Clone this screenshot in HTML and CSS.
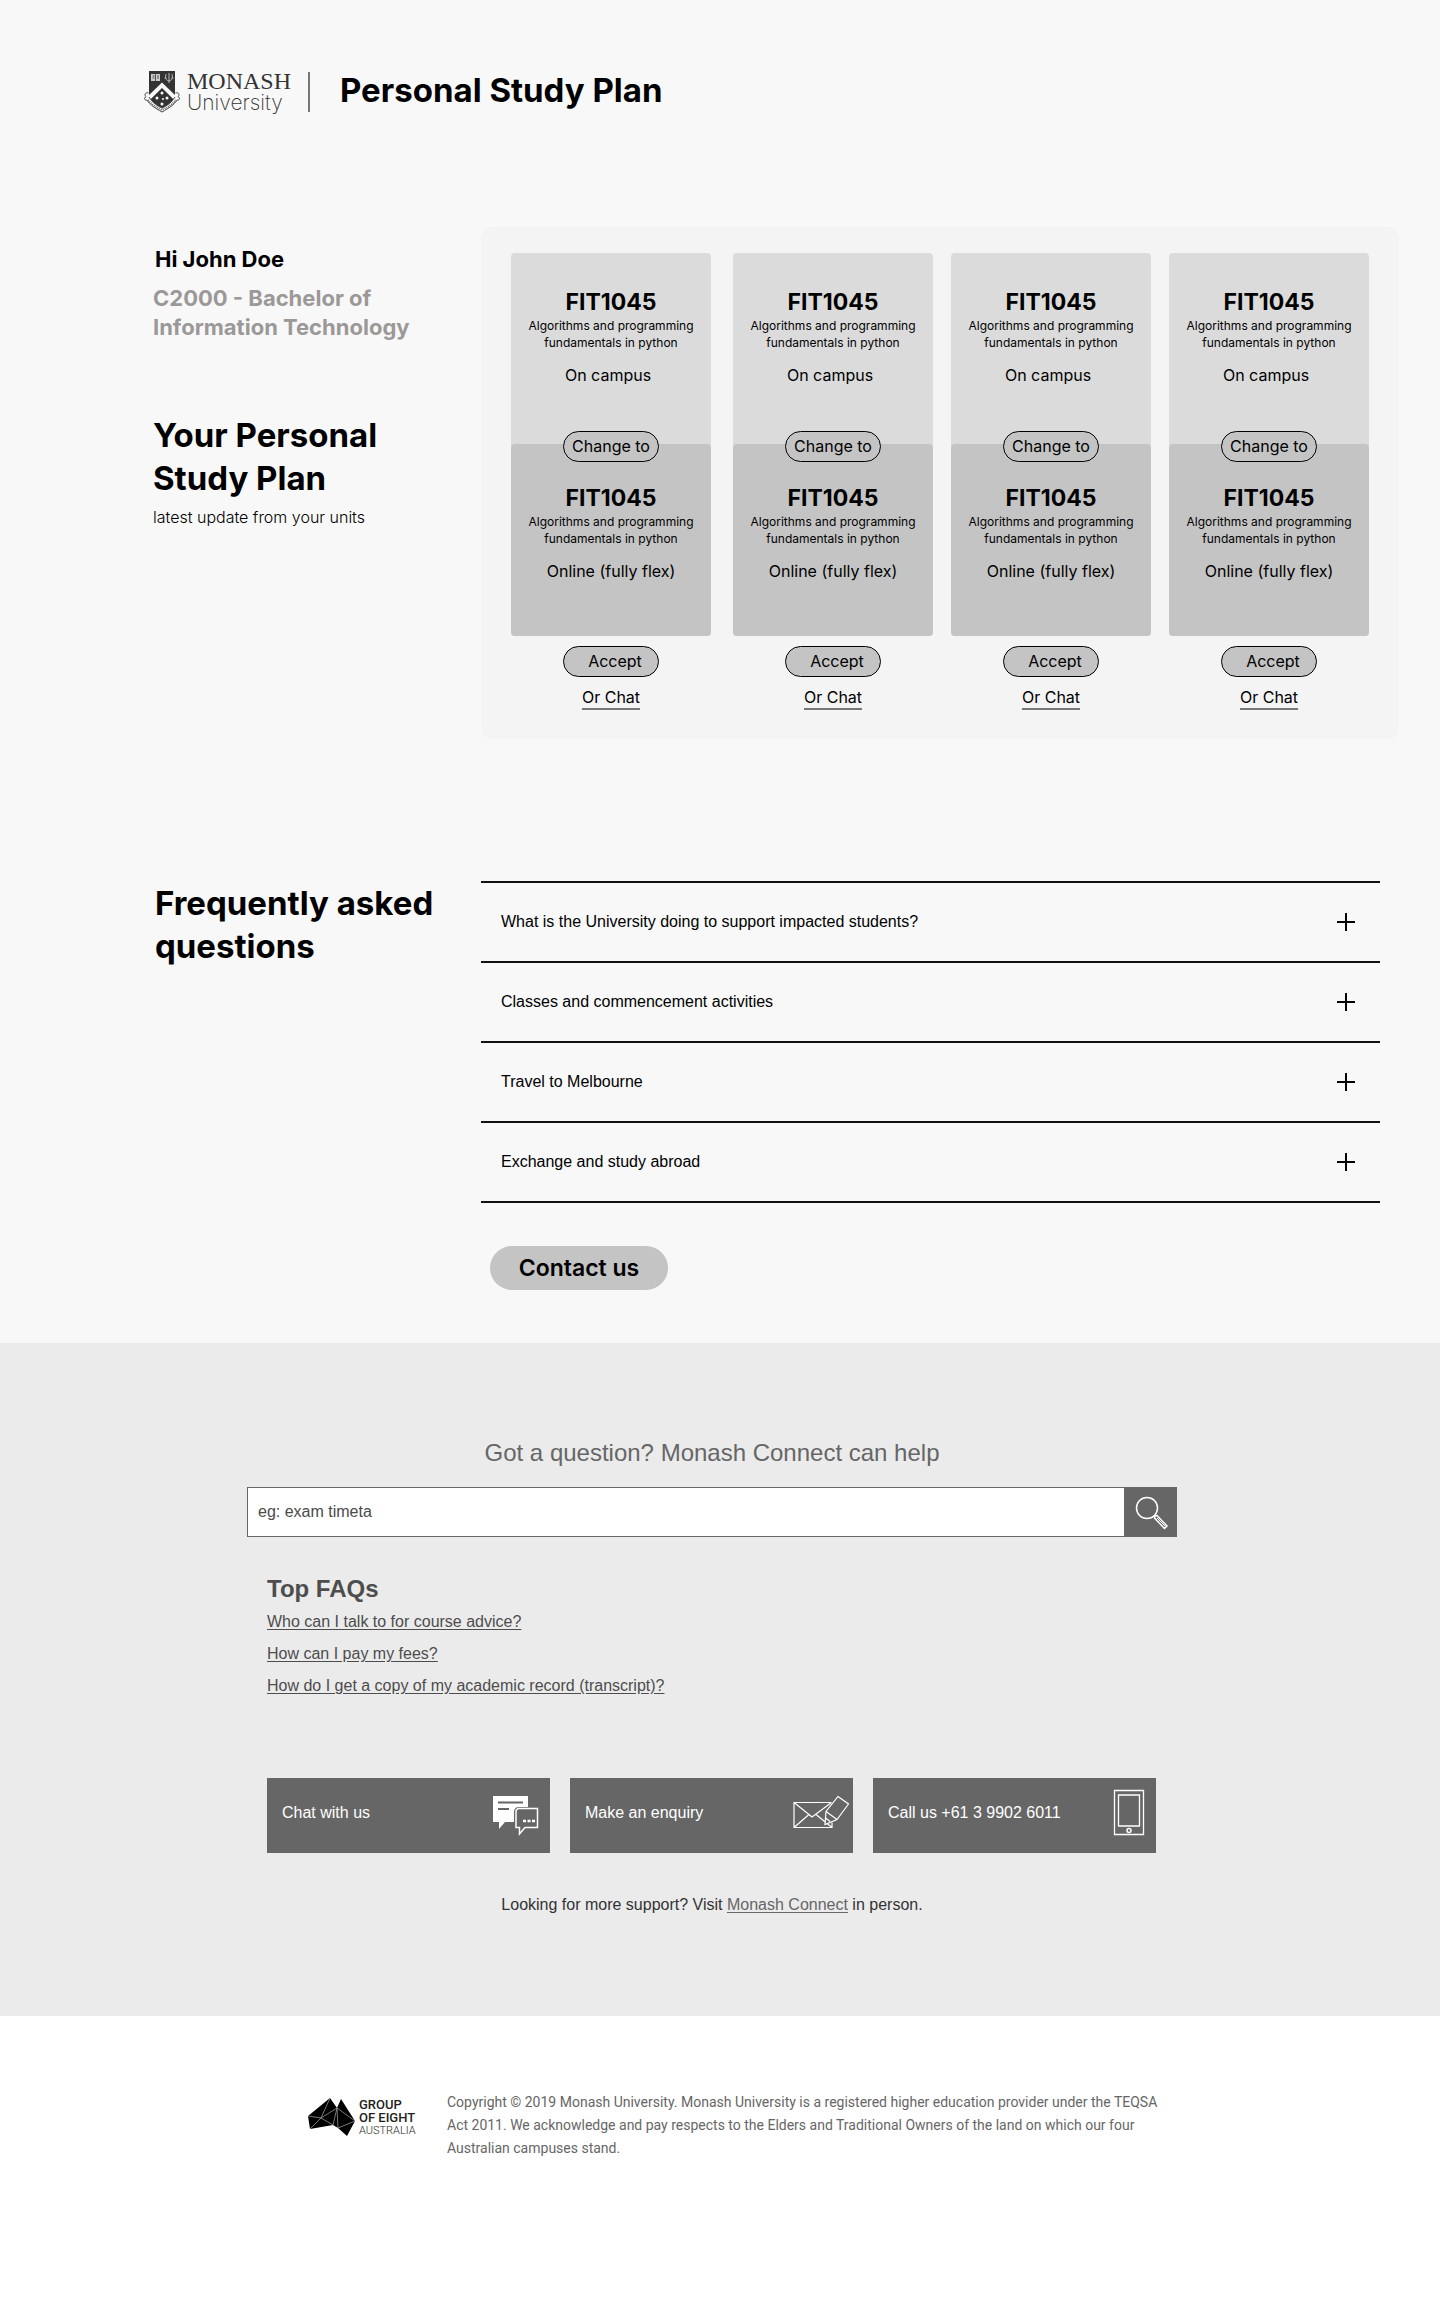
FILE: index.html
```html
<!DOCTYPE html>
<html lang="en">
<head>
<meta charset="utf-8">
<meta name="viewport" content="width=device-width, initial-scale=1">
<title>Personal Study Plan - Monash University</title>
<link rel="stylesheet" href="styles.css">
</head>
<body>
<div class="plan-page">
  <header class="site-header">
    <a class="brand" href="#" aria-label="Monash University">
      <svg class="crest" viewBox="0 0 38 42" aria-hidden="true">
        <path d="M5 0h26v22c0 7-6 12-13 15C11 34 5 29 5 22z" fill="#333"/>
        <path d="M18 11.500 33 26v6L18 17.500 3 32v-6z" fill="#f8f8f8"/>
        <path d="M18 17 7 28c3 4 7 7 11 9 4-2 8-5 11-9z" fill="#333"/>
        <path d="M7 3h9v7h-9z" fill="#ccc"/>
        <path d="M11.500 3v7M8.500 5h2M8.500 7h2M13 5h2M13 7h2" stroke="#333" stroke-width=".8"/>
        <path d="M22 3c-1 5 0 6 3 7 3-1 4-2 3-7M25 2v10M20.500 7h2M27.500 7h2" fill="none" stroke="#bbb"/>
        <g fill="#f8f8f8"><circle cx="18" cy="22" r="1.500"/><circle cx="18" cy="33" r="1.500"/><circle cx="13" cy="27" r="1.500"/><circle cx="23" cy="27" r="1.500"/><circle cx="19" cy="28" r="1"/></g>
        <path d="M4.500 22C1 21 0 24 2 25.500c-3 2-1 4 1 3.500 3 5 8 8 15 12 7-4 12-7 15-12 2 .5 4-1.500 1-3.500 2-1.500 1-4.500-2.500-3.500M5 26c3 5 7 8 13 11 6-3 10-6 13-11" fill="none" stroke="#444"/>
        <path d="M4 29c4 5 8 7 14 10 6-3 10-5 14-10" fill="none" stroke="#666" stroke-width="2" stroke-dasharray="1 1"/>
      </svg>
      <span class="wordmark"><span class="wordmark-top">MONASH</span><span class="wordmark-bottom">University</span></span>
    </a>
    <h1 class="page-title">Personal Study Plan</h1>
  </header>

  <main>
    <section class="split plan">
      <div class="intro">
        <p class="greeting">Hi John Doe</p>
        <p class="course">C2000 - Bachelor of<br>Information Technology</p>
        <h2 class="heading">Your Personal<br>Study Plan</h2>
        <p class="note">latest update from your units</p>
      </div>
      <div class="panel">
        <article class="unit">
          <div class="stack">
            <div class="offer"><h3 class="code">FIT1045</h3><p class="desc">Algorithms and programming fundamentals in python</p><p class="mode mode-campus">On campus</p></div>
            <div class="offer offer-new"><button class="pill pill-change" type="button">Change to</button><h3 class="code">FIT1045</h3><p class="desc">Algorithms and programming fundamentals in python</p><p class="mode">Online (fully flex)</p></div>
          </div>
          <button class="pill pill-accept" type="button">Accept</button>
          <a class="chat-link" href="#">Or Chat</a>
        </article>
        <article class="unit">
          <div class="stack">
            <div class="offer"><h3 class="code">FIT1045</h3><p class="desc">Algorithms and programming fundamentals in python</p><p class="mode mode-campus">On campus</p></div>
            <div class="offer offer-new"><button class="pill pill-change" type="button">Change to</button><h3 class="code">FIT1045</h3><p class="desc">Algorithms and programming fundamentals in python</p><p class="mode">Online (fully flex)</p></div>
          </div>
          <button class="pill pill-accept" type="button">Accept</button>
          <a class="chat-link" href="#">Or Chat</a>
        </article>
        <article class="unit">
          <div class="stack">
            <div class="offer"><h3 class="code">FIT1045</h3><p class="desc">Algorithms and programming fundamentals in python</p><p class="mode mode-campus">On campus</p></div>
            <div class="offer offer-new"><button class="pill pill-change" type="button">Change to</button><h3 class="code">FIT1045</h3><p class="desc">Algorithms and programming fundamentals in python</p><p class="mode">Online (fully flex)</p></div>
          </div>
          <button class="pill pill-accept" type="button">Accept</button>
          <a class="chat-link" href="#">Or Chat</a>
        </article>
        <article class="unit">
          <div class="stack">
            <div class="offer"><h3 class="code">FIT1045</h3><p class="desc">Algorithms and programming fundamentals in python</p><p class="mode mode-campus">On campus</p></div>
            <div class="offer offer-new"><button class="pill pill-change" type="button">Change to</button><h3 class="code">FIT1045</h3><p class="desc">Algorithms and programming fundamentals in python</p><p class="mode">Online (fully flex)</p></div>
          </div>
          <button class="pill pill-accept" type="button">Accept</button>
          <a class="chat-link" href="#">Or Chat</a>
        </article>
      </div>
    </section>

    <section class="split faq">
      <h2 class="heading">Frequently asked<br>questions</h2>
      <div>
        <ul class="faq-list">
          <li><button class="faq-item" type="button" aria-expanded="false">What is the University doing to support impacted students?<svg class="plus" viewBox="0 0 18 18" aria-hidden="true"><path d="M9 0v18M0 9h18"/></svg></button></li>
          <li><button class="faq-item" type="button" aria-expanded="false">Classes and commencement activities<svg class="plus" viewBox="0 0 18 18" aria-hidden="true"><path d="M9 0v18M0 9h18"/></svg></button></li>
          <li><button class="faq-item" type="button" aria-expanded="false">Travel to Melbourne<svg class="plus" viewBox="0 0 18 18" aria-hidden="true"><path d="M9 0v18M0 9h18"/></svg></button></li>
          <li><button class="faq-item" type="button" aria-expanded="false">Exchange and study abroad<svg class="plus" viewBox="0 0 18 18" aria-hidden="true"><path d="M9 0v18M0 9h18"/></svg></button></li>
        </ul>
        <button class="contact" type="button">Contact us</button>
      </div>
    </section>
  </main>
</div>

<section class="connect">
  <div class="connect-inner">
    <h2 class="connect-title"><label for="question">Got a question? Monash Connect can help</label></h2>
    <form class="search">
      <input class="search-input" id="question" type="text" value="eg: exam timeta">
      <button class="search-button" type="submit" aria-label="Search">
        <svg width="36" height="36" viewBox="0 0 36 36" fill="none" stroke="#fff" aria-hidden="true"><circle cx="14" cy="14" r="10.500" stroke-width="1.500"/><path d="m22 22 2-.5 10 10.500-2.500 2.500L21.500 24z" stroke-width="1.500"/><path d="m24 24 8 8"/></svg>
      </button>
    </form>
    <div class="help">
      <h3 class="help-title">Top FAQs</h3>
      <ul class="help-links">
        <li><a href="#">Who can I talk to for course advice?</a></li>
        <li><a href="#">How can I pay my fees?</a></li>
        <li><a href="#">How do I get a copy of my academic record (transcript)?</a></li>
      </ul>
      <div class="actions">
        <a class="action action-chat" href="#">Chat with us
          <svg width="45" height="36" viewBox="0 0 45 36" aria-hidden="true"><path d="M0 1h35v11H26c-3 0-5 2-5 5v10h-9l-6 7v-7H0z" fill="#fff"/><path d="M5 7.500h25M5 14h11" stroke="#666" stroke-width="2"/><path d="M25 14.500h19.500v19H32L26.500 40v-6.500H23v-17z" transform="translate(0 -1)" fill="#666" stroke="#fff" stroke-width="1.500"/><path d="M30 26h3M34.500 26h3M39 26h3" stroke="#fff" stroke-width="2.500"/></svg>
        </a>
        <a class="action action-mail" href="#">Make an enquiry
          <svg width="56" height="36" viewBox="0 0 56 36" fill="none" stroke="#fff" stroke-width="1.200" aria-hidden="true"><path d="M38.500 7.500H1v25h38v-5M1 7.500l15 12 3 2.500 19.500-14.500M1 32.500l15-13M39 32.500 23 19.500"/><path d="M45 1.500 55.500 9 44 24.500 32 29.500l1-13zM33 16.500l11 8M32 22.500l5 4" fill="#666"/></svg>
        </a>
        <a class="action" href="#">Call us +61 3 9902 6011
          <svg width="30" height="46" viewBox="0 0 30 46" fill="none" stroke="#fff" aria-hidden="true"><path d="M.5.5h29v44H.5zM4.500 5h21v31h-21z" stroke-width="1.300"/><circle cx="15" cy="40.500" r="2" stroke-width="1.500"/></svg>
        </a>
      </div>
    </div>
    <p class="support">Looking for more support? Visit <a href="#">Monash Connect</a> in person.</p>
  </div>
</section>

<footer class="site-footer">
  <div class="go8">
    <svg width="49" height="40" viewBox="0 0 49 40" aria-hidden="true"><path d="M1 19 23 1l7 10 4-9 14 22-8 15-9-8-5-3-23 4z" fill="#000"/><path d="M1 19l13 2L23 1M14 21l16-10M14 21l-11 11M14 21l12 7 4-17 1 20M30 11l18 13-17 7" fill="none" stroke="#aaa" stroke-width=".7"/></svg>
    <p class="go8-name"><b>GROUP</b><b>OF EIGHT</b><span>AUSTRALIA</span></p>
  </div>
  <p class="legal">Copyright © 2019 Monash University. Monash University is a registered higher education provider under the TEQSA Act 2011. We acknowledge and pay respects to the Elders and Traditional Owners of the land on which our four Australian campuses stand.</p>
</footer>
</body>
</html>
```
FILE: styles.css
```css
* { box-sizing: border-box; }
body {
  margin: 0;
  background: #fff;
  color: #000;
  font-family: "Liberation Sans", Arial, sans-serif;
  font-size: 16px;
}
h1, h2, h3, p, ul { margin: 0; padding: 0; }
ul { list-style: none; }
button { font: inherit; color: inherit; cursor: pointer; }
a { color: inherit; }

.plan-page {
  padding: 68px 41px 53px 153px;
  background: #f8f8f8;
  font-family: Inter, sans-serif;
}
.site-header {
  display: flex;
  align-items: center;
  height: 48px;
  margin: 0 0 111px -9px;
}
.brand {
  display: flex;
  align-items: center;
  gap: 5px;
  width: 166px;
  height: 40px;
  border-right: 2px solid #777;
  color: #333;
  text-decoration: none;
}
.crest { flex: none; width: 38px; height: 42px; }
.wordmark { display: flex; flex-direction: column; }
.wordmark-top { font: 24px/22px "Liberation Serif", serif; }
.wordmark-bottom { font-size: 21px; line-height: 22px; font-weight: 200; }
.page-title {
  margin-left: 30px;
  padding-bottom: 4px;
  font-size: 33px;
  line-height: 44px;
  font-weight: 700;
}

.split {
  display: grid;
  grid-template-columns: 328px minmax(0, 1fr);
}
.intro { padding-top: 18px; }
.greeting, .course, .code {
  font-size: 22px;
  line-height: 29px;
  font-weight: 700;
}
.greeting { margin: 0 0 10px 2px; }
.course { color: #9c9898; }
.code { font-size: 23px; }
.heading {
  font-size: 33px;
  line-height: 43px;
  font-weight: 700;
}
.intro .heading { margin: 72px 0 7px; }
.note { font-size: 16px; line-height: 20px; font-weight: 300; }

.panel {
  display: grid;
  grid-template-columns: 204fr 200fr 200fr 200fr;
  column-gap: 18px;
  padding: 26px 30px 29px;
  border-radius: 10px;
  background: #f4f4f4;
}
.unit {
  display: flex;
  flex-direction: column;
  align-items: center;
  max-width: 200px;
  font-size: 16px;
}
.stack {
  width: 100%;
  margin-bottom: 10px;
  border-radius: 4px;
  background: #dbdbdb;
  text-align: center;
}
.offer { min-height: 191px; padding: 35px 10px 0; }
.offer-new {
  position: relative;
  min-height: 192px;
  padding-top: 40px;
  border-radius: 4px;
  background: #c4c4c4;
}
.desc { font-size: 12px; line-height: 17px; }
.mode { margin-top: 13px; line-height: 22px; }
.mode-campus { padding-right: 6px; }
.pill {
  width: 96px;
  height: 31px;
  padding: 0;
  border: 1px solid #000;
  border-radius: 16px;
  background: #c4c4c4;
  line-height: 29px;
}
.pill-change {
  position: absolute;
  top: -13px;
  left: calc(50% - 48px);
}
.pill-accept { padding-left: 8px; }
.chat-link {
  margin-top: 10px;
  border-bottom: 2px solid #777;
  line-height: 21px;
  text-decoration: none;
}

.faq { margin-top: 142px; padding-right: 19px; }
.faq .heading { padding: 1px 0 0 2px; }
.faq-list { border-bottom: 2px solid #111; }
.faq-item {
  display: flex;
  align-items: center;
  justify-content: space-between;
  width: 100%;
  height: 80px;
  padding: 0 25px 0 20px;
  border: 0;
  border-top: 2px solid #111;
  background: none;
  font: 16px/20px "Liberation Sans", Arial, sans-serif;
  text-align: left;
}
.plus { width: 18px; height: 18px; stroke: #000; stroke-width: 2; }
.contact {
  width: 178px;
  height: 44px;
  margin: 43px 0 0 9px;
  padding: 0;
  border: 0;
  border-radius: 22px;
  background: #c4c4c4;
  font-size: 23px;
  font-weight: 600;
}

.connect {
  padding: 96px 16px 102px 0;
  background: #ebebeb;
}
.connect-inner { max-width: 930px; margin: 0 auto; }
.connect-title {
  color: #666;
  font-size: 24px;
  line-height: 28px;
  font-weight: 400;
  text-align: center;
}
.search { display: flex; height: 50px; margin-top: 20px; }
.search-input {
  flex: 1;
  min-width: 0;
  padding: 0 10px;
  border: 1px solid #666;
  border-right: 0;
  border-radius: 0;
  background: #fff;
  color: #4a4a4a;
  font: inherit;
}
.search-button {
  display: grid;
  place-items: center;
  width: 53px;
  padding: 0;
  border: 0;
  background: #666;
}
.help { padding: 38px 21px 0 20px; color: #4d4d4d; }
.help-title { margin-bottom: 3px; font-size: 24px; line-height: 28px; }
.help-links { line-height: 32px; }
.help-links a, .support a { text-underline-offset: 2px; }
.actions {
  display: grid;
  grid-template-columns: repeat(3, 1fr);
  gap: 20px;
  margin-top: 76px;
}
.action {
  display: flex;
  align-items: center;
  justify-content: space-between;
  height: 75px;
  padding: 0 12px 6px 15px;
  background: #666;
  color: #fff;
  text-decoration: none;
}
.action-mail { padding-right: 4px; }
.action svg { flex: none; overflow: visible; }
.support {
  margin-top: 43px;
  color: #333;
  line-height: 18px;
  text-align: center;
}
.support a { color: #666; }

.site-footer {
  display: flex;
  align-items: flex-start;
  padding: 75px 0 140px;
  margin-left: 307px;
}
.go8 { display: flex; gap: 3px; flex: none; width: 140px; padding-top: 6px; }
.go8-name {
  display: flex;
  flex-direction: column;
  padding-top: 1px;
  color: #231f20;
  font: 13px/13px Roboto, sans-serif;
}
.go8-name b { font-weight: 500; }
.go8-name span { font-size: 11px; font-weight: 300; }
.legal {
  max-width: 720px;
  color: #666;
  font: 14px/23px Roboto, sans-serif;
}
```
